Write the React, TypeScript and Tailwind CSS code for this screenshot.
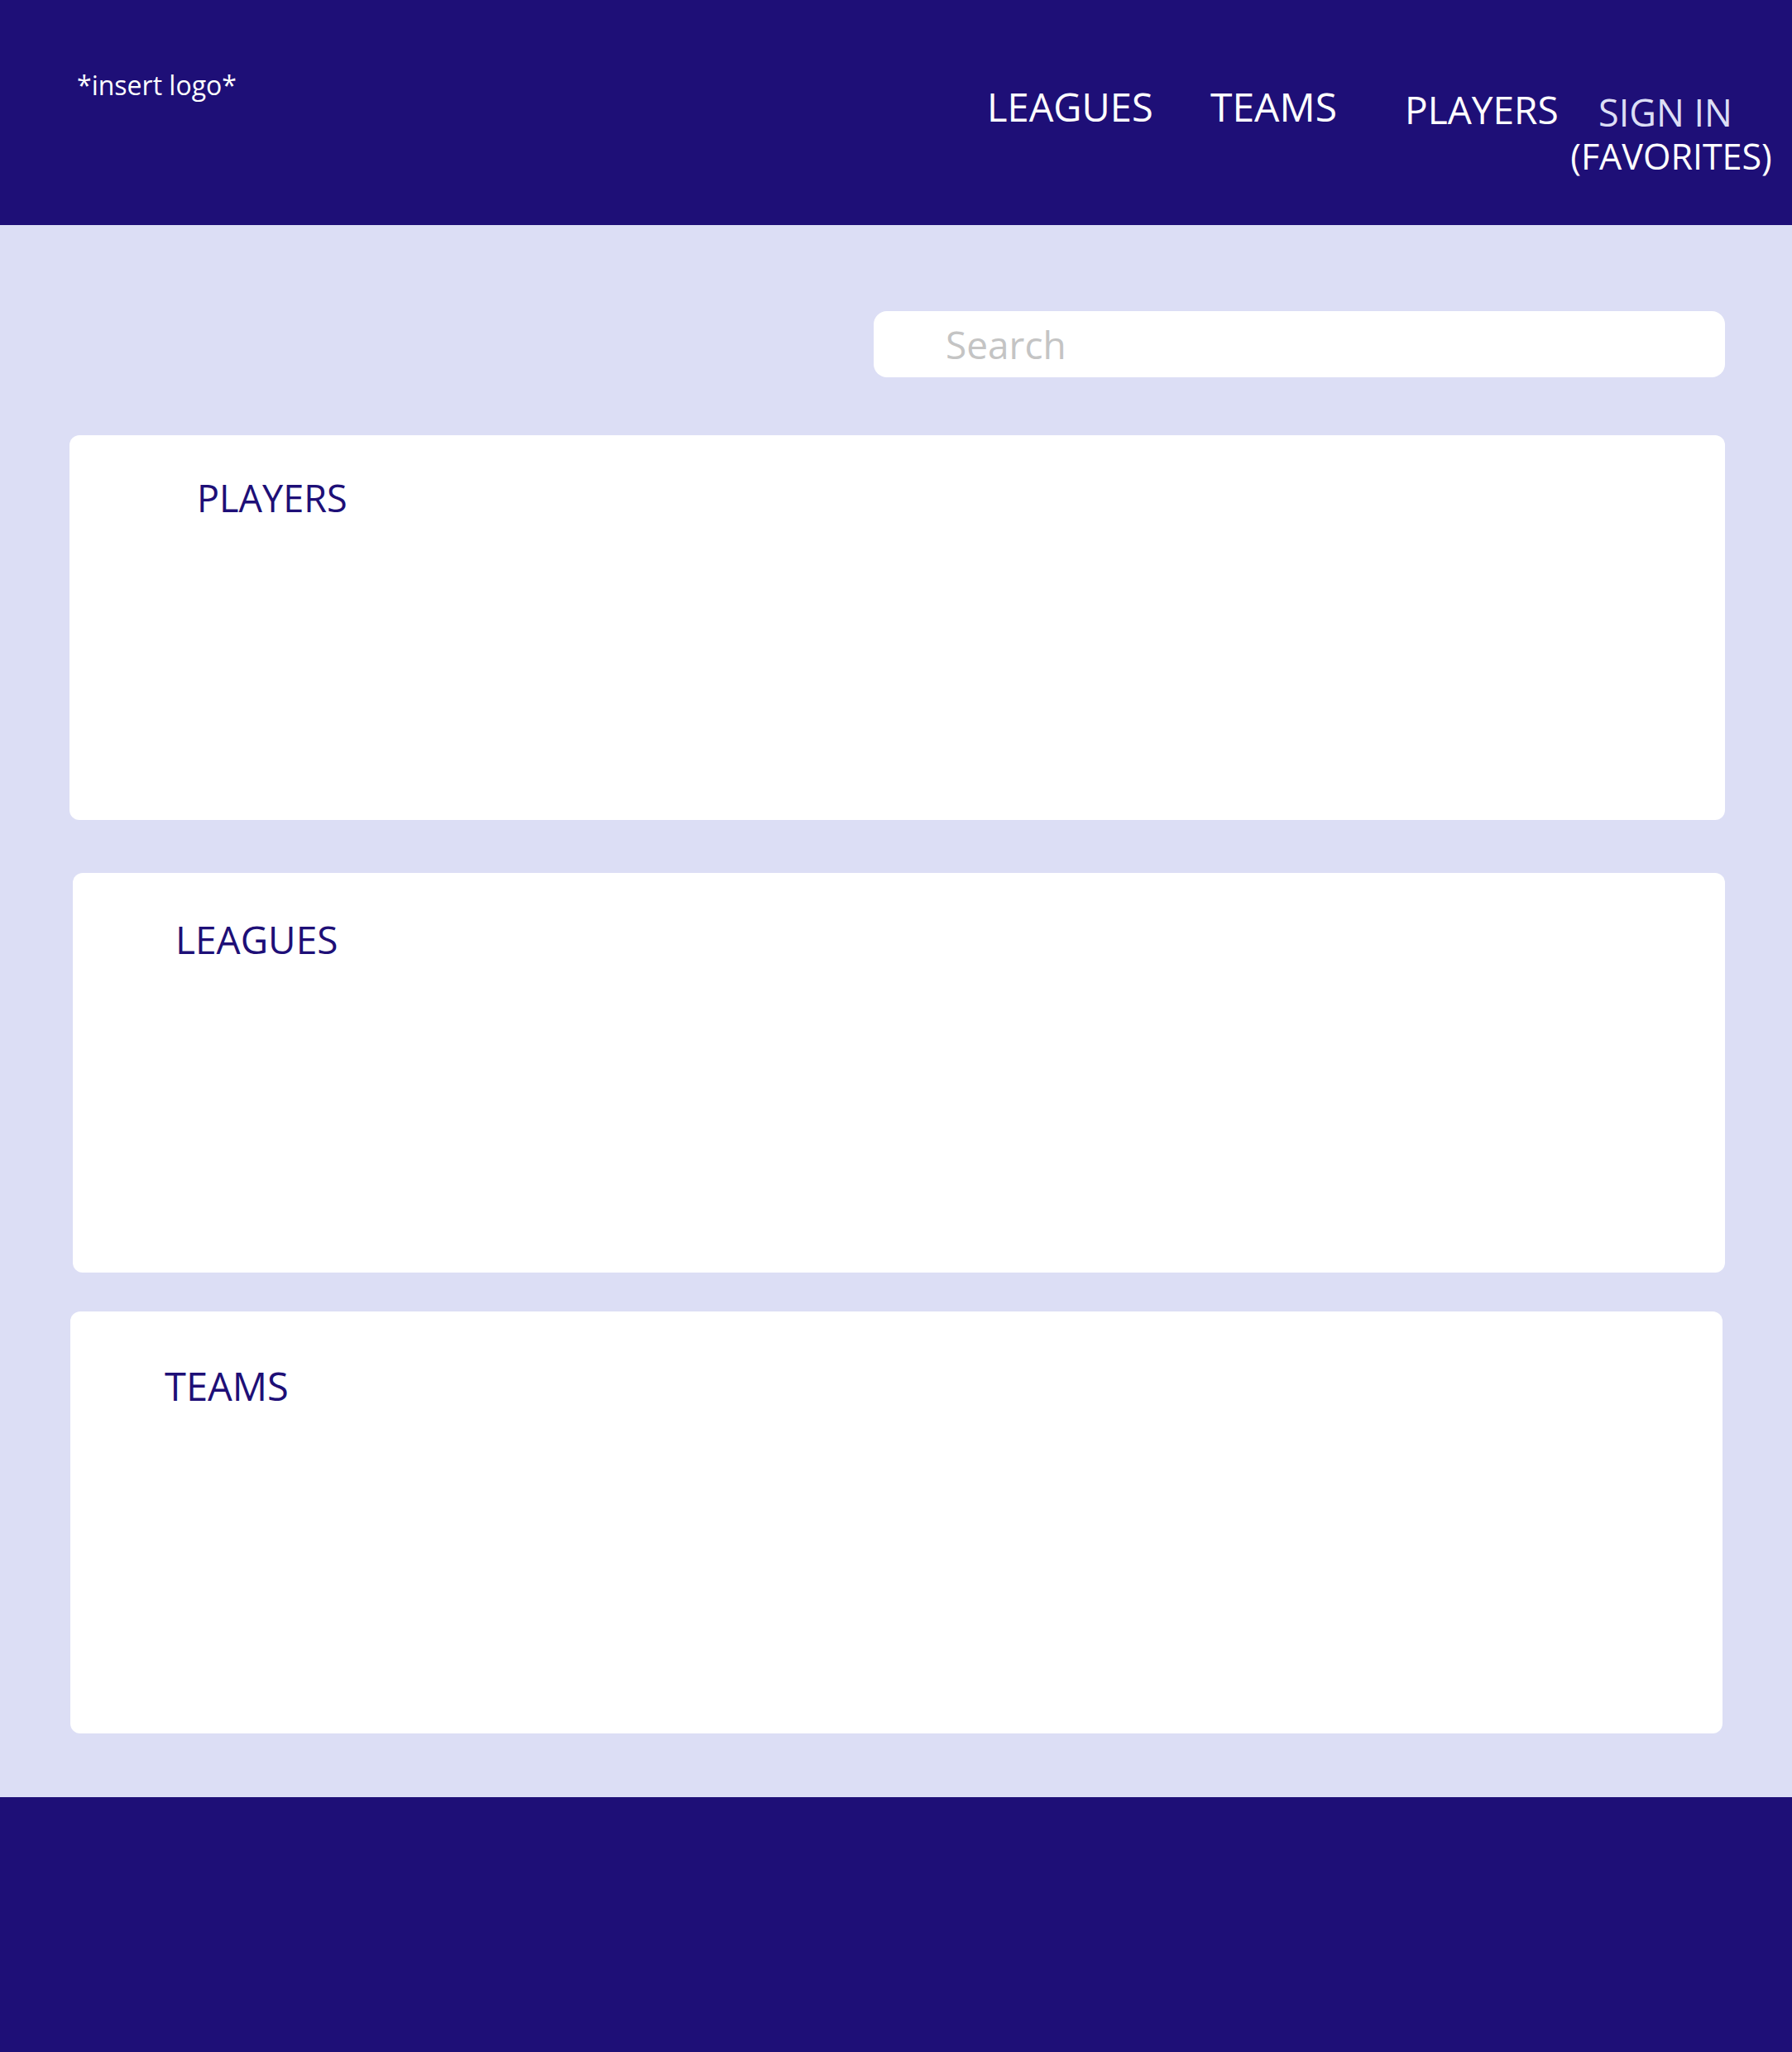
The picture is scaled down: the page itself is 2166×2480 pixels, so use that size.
import React from 'react';

const font = { fontFamily: '"Open Sans", "Noto Sans", sans-serif' };

function Header() {
  return (
    <header className="flex h-[272px] bg-[#1e0f77] text-white">
      {/* logo placeholder */}
      <div className="w-[1193px] shrink-0 pl-[93px] pt-[87px]">
        <span className="text-[32px] leading-none">*insert logo*</span>
      </div>

      <nav className="flex">
        <a href="#" className="w-[270px] pt-[106px] text-[47px] leading-none">
          LEAGUES
        </a>
        <a href="#" className="w-[235px] pt-[105px] text-[48px] leading-none">
          TEAMS
        </a>
        <a href="#" className="w-[202px] pt-[109px] text-[46px] leading-none">
          PLAYERS
        </a>
        <a href="#" className="flex w-[240px] flex-col items-center pt-[113px] leading-none">
          <span className="mr-[14px] text-[45px] text-[#dcdef5]">SIGN IN</span>
          <span className="mt-[9px] text-[43px]">(FAVORITES)</span>
        </a>
      </nav>
    </header>
  );
}

function Card({ title, className, titleClass }: { title: string; className: string; titleClass: string }) {
  return (
    <section className={`rounded-[12px] bg-white ${className}`}>
      <h2 className={`leading-none text-[#1e0f77] ${titleClass}`}>{title}</h2>
    </section>
  );
}

export default function App() {
  return (
    <div style={font} className="min-h-[2480px] w-full bg-[#dcdef5]">
      <Header />

      <main className="flex flex-col pb-[77px]">
        <div className="flex justify-end pr-[81px] pt-[104px]">
          <input
            type="text"
            placeholder="Search"
            className="h-[80px] w-[1029px] rounded-[16px] bg-white pl-[87px] text-[46px] text-[#555] outline-none placeholder:text-[#c4c4c4]"
          />
        </div>

        <Card title="PLAYERS" className="ml-[84px] mt-[70px] h-[465px] w-[2001px]" titleClass="pl-[154px] pt-[53px] text-[45px]" />
        <Card title="LEAGUES" className="ml-[88px] mt-[64px] h-[483px] w-[1997px]" titleClass="pl-[124px] pt-[57px] text-[46px]" />
        <Card title="TEAMS" className="ml-[85px] mt-[47px] h-[510px] w-[1997px]" titleClass="pl-[114px] pt-[67px] text-[47px]" />
      </main>

      <footer className="h-[308px] bg-[#1e0f77]" />
    </div>
  );
}
